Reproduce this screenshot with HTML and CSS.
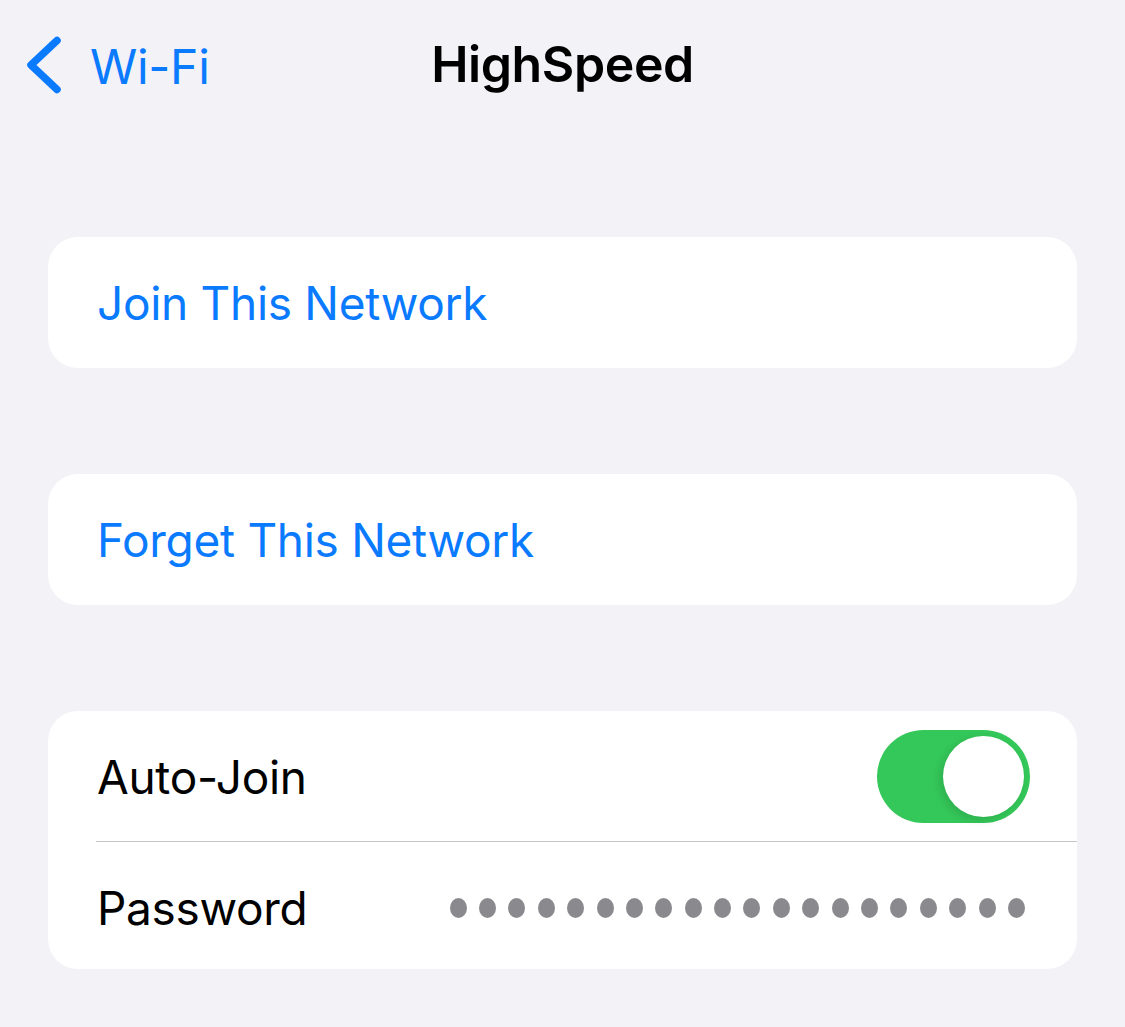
FILE: index.html
```html
<!DOCTYPE html>
<html>
<head>
<meta charset="utf-8">
<link rel="stylesheet" href="styles.css">
</head>
<body>
<div class="screen">
  <header class="nav">
    <div class="back">
      <svg class="chevron" width="44" height="64" viewBox="0 0 44 64"><path d="M35 6.5 L9 31 L35 55.5" fill="none" stroke="#0a7aff" stroke-width="7.5" stroke-linecap="round" stroke-linejoin="round"/></svg>
      <span class="back-label">Wi-Fi</span>
    </div>
    <div class="title">HighSpeed</div>
  </header>
  <main class="content">
    <section class="card">
      <div class="row"><span class="action">Join This Network</span></div>
    </section>
    <section class="card">
      <div class="row"><span class="action">Forget This Network</span></div>
    </section>
    <section class="card">
      <div class="row row-sep">
        <span class="label">Auto-Join</span>
        <div class="toggle"><div class="knob"></div></div>
      </div>
      <div class="row row-last">
        <span class="label">Password</span>
        <div class="dots">
          <i></i><i></i><i></i><i></i><i></i><i></i><i></i><i></i><i></i><i></i>
          <i></i><i></i><i></i><i></i><i></i><i></i><i></i><i></i><i></i><i></i>
        </div>
      </div>
    </section>
  </main>
</div>
</body>
</html>
```
FILE: styles.css
```css
html, body {
  margin: 0;
  padding: 0;
  background: #f2f2f7;
}
body {
  font-family: Inter, "Noto Sans", "Liberation Sans", sans-serif;
  width: 1125px;
  height: 1027px;
  overflow: hidden;
}
.screen {
  display: flex;
  flex-direction: column;
}
.nav {
  position: relative;
  height: 130px;
  display: flex;
  align-items: center;
  justify-content: center;
}
.back {
  position: absolute;
  left: 22px;
  top: 34px;
  display: flex;
  align-items: center;
  gap: 24px;
}
.chevron {
  display: block;
}
.back-label {
  color: #0a7aff;
  font-size: 48px;
  letter-spacing: -0.3px;
}
.title {
  font-size: 50px;
  font-weight: 600;
  color: #000;
  letter-spacing: -0.4px;
  margin-top: -2px;
}
.content {
  padding: 107px 48px 0;
  display: flex;
  flex-direction: column;
  gap: 106px;
}
.card {
  background: #fff;
  border-radius: 30px;
  overflow: hidden;
}
.row {
  height: 131px;
  padding: 0 48px 0 49px;
  display: flex;
  align-items: center;
  justify-content: space-between;
  position: relative;
}
.row-last {
  height: 123px;
  padding-top: 4px;
}
.row-sep::after {
  content: "";
  position: absolute;
  left: 48px;
  right: 0;
  bottom: 0;
  height: 1px;
  background: #c6c6c8;
}
.action {
  color: #0a7aff;
  font-size: 46px;
  letter-spacing: -0.3px;
}
.label {
  color: #000;
  font-size: 46px;
  letter-spacing: -0.3px;
}
.toggle {
  width: 153px;
  height: 93px;
  border-radius: 47px;
  background: #34c759;
  position: relative;
  margin-right: -1px;
}
.knob {
  position: absolute;
  right: 6px;
  top: 6px;
  width: 81px;
  height: 81px;
  border-radius: 50%;
  background: #fff;
  box-shadow: -3px 3px 8px rgba(0,0,0,0.12);
}
.dots {
  display: flex;
  gap: 12.4px;
  margin-right: 4px;
}
.dots i {
  display: block;
  width: 17px;
  height: 20px;
  border-radius: 50%;
  background: #8a8a8e;
}
```
